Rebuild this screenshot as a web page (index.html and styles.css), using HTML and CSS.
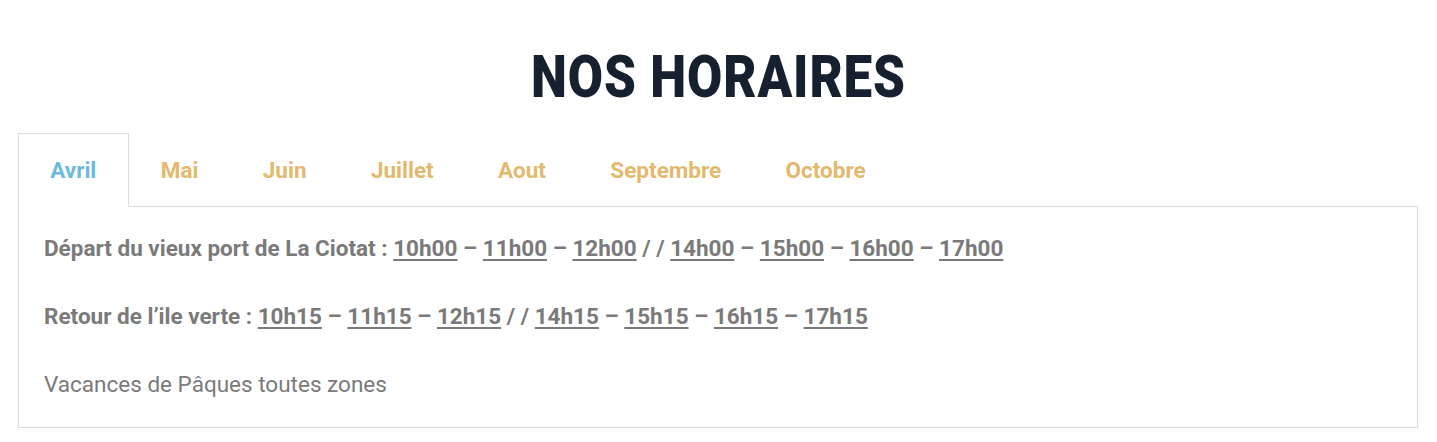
FILE: index.html
```html
<!DOCTYPE html>
<html lang="fr">
<head>
<meta charset="utf-8">
<title>Nos horaires</title>
<link rel="stylesheet" href="styles.css">
</head>
<body>
<section class="schedule">
  <h2 class="schedule-title"><span class="schedule-title-text">NOS HORAIRES</span></h2>
  <ul class="tabs">
    <li class="tab tab-active">Avril</li>
    <li class="tab">Mai</li>
    <li class="tab">Juin</li>
    <li class="tab">Juillet</li>
    <li class="tab">Aout</li>
    <li class="tab">Septembre</li>
    <li class="tab">Octobre</li>
  </ul>
  <div class="panel">
    <p class="line"><strong>Départ du vieux port de La Ciotat : <a href="#">10h00</a> – <a href="#">11h00</a> – <a href="#">12h00</a> / / <a href="#">14h00</a> – <a href="#">15h00</a> – <a href="#">16h00</a> – <a href="#">17h00</a></strong></p>
    <p class="line"><strong>Retour de l’ile verte : <a href="#">10h15</a> – <a href="#">11h15</a> – <a href="#">12h15</a> / / <a href="#">14h15</a> – <a href="#">15h15</a> – <a href="#">16h15</a> – <a href="#">17h15</a></strong></p>
    <p class="line">Vacances de Pâques toutes zones</p>
  </div>
</section>
</body>
</html>
```
FILE: styles.css
```css
html, body {
  margin: 0;
  padding: 0;
  background: #ffffff;
}

body {
  font-family: Roboto, "Liberation Sans", Arial, sans-serif;
}

.schedule {
  margin: 0 19px 0 18px;
  padding-top: 40px;
}

.schedule-title {
  margin: 0 0 20px;
  text-align: center;
  font-size: 59px;
  line-height: 73px;
  font-weight: 900;
  color: #17202e;
}

.schedule-title-text {
  display: inline-block;
  transform: scaleX(0.866);
  letter-spacing: 1px;
}

.tabs {
  display: flex;
  list-style: none;
  margin: 0;
  padding: 0;
  position: relative;
  z-index: 1;
}

.tab {
  padding: 24px 31.2px;
  line-height: 24px;
  font-size: 22.5px;
  font-weight: 700;
  color: #e2b96d;
  border: 1px solid transparent;
  border-bottom: 0;
  margin-bottom: -1px;
  background: transparent;
}

.tab-active {
  color: #6cb9dd;
  border-color: #dcdcdc;
  background: #ffffff;
  padding-bottom: 25px;
}

.panel {
  border: 1px solid #dcdcdc;
  padding: 24px 25px 26px;
}

.line {
  margin: 0 0 34px;
  font-size: 22.5px;
  line-height: 34px;
  color: #7a7a7a;
}

.line:last-child {
  margin-bottom: 0;
}

.line strong {
  font-weight: 700;
}

.line a {
  color: #7a7a7a;
  text-decoration: underline;
  text-underline-offset: 3px;
}
```
